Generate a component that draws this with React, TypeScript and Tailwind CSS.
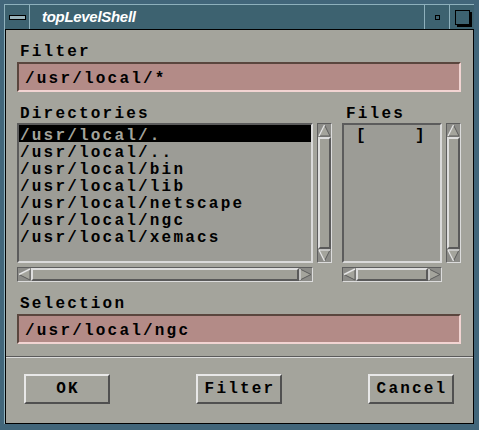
const mono =
  "font-['Liberation_Mono','DejaVu_Sans_Mono',monospace] font-bold text-[16px] tracking-[2.2px] whitespace-pre";

const dirs = [
  "/usr/local/.",
  "/usr/local/..",
  "/usr/local/bin",
  "/usr/local/lib",
  "/usr/local/netscape",
  "/usr/local/ngc",
  "/usr/local/xemacs",
];

function Arrow({ dir }: { dir: "up" | "down" | "left" | "right" }) {
  const pts = {
    up: "6.5,1 12,12 1,12",
    down: "1,1 12,1 6.5,12",
    left: "1,6.5 12,1 12,12",
    right: "1,1 12,6.5 1,12",
  }[dir];
  return (
    <svg width="13" height="13" viewBox="0 0 13 13" className="shrink-0">
      <polygon points={pts} fill="#a4a49c" stroke="#5c5c5c" strokeWidth="1" />
      {dir === "up" && <line x1="6.5" y1="1" x2="1" y2="12" stroke="#e6e6e6" strokeWidth="1.4" />}
      {dir === "down" && <line x1="1" y1="1" x2="12" y2="1" stroke="#e6e6e6" strokeWidth="1.4" />}
      {dir === "down" && <line x1="1" y1="1" x2="6.5" y2="12" stroke="#e6e6e6" strokeWidth="1.4" />}
      {dir === "left" && <line x1="1" y1="6.5" x2="12" y2="1" stroke="#e6e6e6" strokeWidth="1.4" />}
      {dir === "right" && <line x1="1" y1="1" x2="1" y2="12" stroke="#e6e6e6" strokeWidth="1.4" />}
    </svg>
  );
}

function VScroll() {
  return (
    <div className="w-[15px] h-[140px] flex flex-col bg-[#8c8c88] border border-t-[#5e5e5e] border-l-[#5e5e5e] border-b-[#dcdcdc] border-r-[#dcdcdc]">
      <Arrow dir="up" />
      <div className="flex-1 bg-[#a0a098] border-2 border-t-[#dedede] border-l-[#dedede] border-b-[#5a5a5a] border-r-[#5a5a5a]" />
      <Arrow dir="down" />
    </div>
  );
}

function HScroll({ w }: { w: string }) {
  return (
    <div className={`${w} h-[15px] flex bg-[#8c8c88] border border-t-[#5e5e5e] border-l-[#5e5e5e] border-b-[#dcdcdc] border-r-[#dcdcdc]`}>
      <Arrow dir="left" />
      <div className="flex-1 bg-[#a0a098] border-2 border-t-[#dedede] border-l-[#dedede] border-b-[#5a5a5a] border-r-[#5a5a5a]" />
      <Arrow dir="right" />
    </div>
  );
}

function Field({ value }: { value: string }) {
  return (
    <div className="h-[30px] bg-[#b38b87] border-2 border-t-[#5a463e] border-l-[#5a463e] border-b-[#f2d4d2] border-r-[#f2d4d2] pl-[6px] pt-[7px]">
      <div className={`${mono} text-black leading-[17px]`}>{value}</div>
    </div>
  );
}

function Button({ label, w }: { label: string; w: string }) {
  return (
    <div
      className={`${w} h-[30px] flex items-center justify-center bg-[#a4a49c] border-2 border-t-[#e8e8e8] border-l-[#e8e8e8] border-b-[#505050] border-r-[#505050] ${mono} text-black leading-[26px] pl-[2px]`}
    >
      {label}
    </div>
  );
}

export default function App() {
  return (
    <div className="w-[479px] h-[430px] bg-[#42667a] pt-[4px] pl-[4px] pr-[5px] pb-[6px] overflow-hidden">
      <div className="h-full flex flex-col border-t border-l border-t-[#8eb0bc] border-l-[#8eb0bc]">
        {/* Title bar */}
        <div className="h-[25px] flex bg-[#3d6270] border-b border-black">
          <div className="w-[25px] flex items-center justify-center border-r border-r-[#8eb0bc]">
            <div className="w-[17px] h-[5px] bg-[#9ab4bc] border border-black" />
          </div>
          <div className="flex-1 pl-[12px] flex items-center font-['Liberation_Sans',Arial,sans-serif] font-bold italic text-[15px] tracking-[-0.3px] text-white">
            topLevelShell
          </div>
          <div className="w-[25px] flex items-center justify-center border-l border-l-[#8eb0bc]">
            <div className="w-[5px] h-[5px] border border-black" />
          </div>
          <div className="w-[25px] flex items-center justify-center border-l border-l-[#8eb0bc]">
            <div className="w-[15px] h-[15px] border border-black shadow-[2px_2px_0_#000]" />
          </div>
        </div>

        {/* Client */}
        <div className="flex-1 flex flex-col bg-[#a4a49c] border-x border-b border-black">
          <div className="pt-[14px] pl-[11px] pr-[12px] flex flex-col">
            <div className={`${mono} text-black leading-[17px] ml-[3px]`}>Filter</div>
            <div className="mt-[1px]">
              <Field value="/usr/local/*" />
            </div>

            <div className="mt-[14px] flex gap-[10px]">
              <div className="flex flex-col">
                <div className={`${mono} text-black leading-[17px] ml-[3px]`}>Directories</div>
                <div className="flex gap-[4px]">
                  <div className="w-[296px] h-[140px] bg-[#9c9c96] border-2 border-t-[#5c5c5c] border-l-[#5c5c5c] border-b-[#dadada] border-r-[#dadada]">
                    {dirs.map((d, i) => (
                      <div
                        key={d}
                        className={`h-[17px] pl-[1px] pt-[4px] ${i === 0 ? "bg-black text-[#a4a49c]" : "text-black"}`}
                      >
                        <div className={`${mono} leading-[14px]`}>{d}</div>
                      </div>
                    ))}
                  </div>
                  <VScroll />
                </div>
                <div className="mt-[4px]">
                  <HScroll w="w-[296px]" />
                </div>
              </div>

              <div className="flex flex-col">
                <div className={`${mono} text-black leading-[17px] ml-[4px]`}>Files</div>
                <div className="flex gap-[4px]">
                  <div className="w-[100px] h-[140px] bg-[#9c9c96] border-2 border-t-[#5c5c5c] border-l-[#5c5c5c] border-b-[#dadada] border-r-[#dadada] pt-[4px] pl-[12px]">
                    <div className={`${mono} text-black leading-[14px]`}>{"[    ]"}</div>
                  </div>
                  <VScroll />
                </div>
                <div className="mt-[4px]">
                  <HScroll w="w-[100px]" />
                </div>
              </div>
            </div>

            <div className={`${mono} text-black leading-[17px] ml-[3px] mt-[14px]`}>Selection</div>
            <div className="mt-[1px]">
              <Field value="/usr/local/ngc" />
            </div>
          </div>

          <div className="mt-[12px] border-t border-t-[#5a5a5a] border-b border-b-[#dcdcdc]" />

          <div className="mt-[16px] pl-[18px] flex gap-[86px]">
            <Button label="OK" w="w-[86px]" />
            <Button label="Filter" w="w-[86px]" />
            <Button label="Cancel" w="w-[86px]" />
          </div>
        </div>
      </div>
    </div>
  );
}
